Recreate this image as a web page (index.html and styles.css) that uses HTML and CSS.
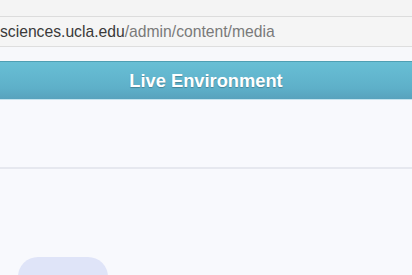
FILE: index.html
```html
<!DOCTYPE html>
<html>
<head>
<meta charset="utf-8">
<link rel="stylesheet" href="styles.css">
</head>
<body>
<div class="chrome-top"></div>
<div class="urlbar"><span class="host">sciences.ucla.edu</span><span class="path">/admin/content/media</span></div>
<div class="gap"></div>
<div class="env-bar">Live Environment</div>
<div class="toolbar"></div>
<div class="content">
  <div class="pill"></div>
</div>
</body>
</html>
```
FILE: styles.css
```css
html, body {
  margin: 0;
  padding: 0;
  background: #f8f9fd;
  overflow: hidden;
  height: 275px;
  font-family: "Liberation Sans", Arial, sans-serif;
}
.chrome-top {
  height: 16px;
  background: #f4f4f4;
  border-bottom: 1px solid #dcdcdc;
}
.urlbar {
  height: 30px;
  background: #f5f5f5;
  border-bottom: 1px solid #dedede;
  display: flex;
  align-items: center;
  font-size: 15.7px;
  line-height: 30px;
  padding-top: 1px;
  box-sizing: border-box;
  white-space: nowrap;
}
.host { color: #3a3a3a; }
.path { color: #7a7a7a; }
.gap {
  height: 14px;
  background: #f7f8fb;
}
.env-bar {
  height: 39px;
  box-sizing: border-box;
  border-top: 1px solid #4f9fb3;
  background: linear-gradient(#68bfd5, #5eb0c9 70%, #58a2bd);
  color: #fff;
  font-weight: bold;
  font-size: 18.3px;
  text-align: center;
  line-height: 38px;
  text-shadow: 0 1px 1px rgba(0,0,0,0.25);
  border-bottom: 1px solid #c6e4ee;
}
.toolbar {
  height: 67px;
  background: #f8f9fd;
  border-bottom: 2px solid #e6e8ef;
}
.content {
  height: 106px;
  overflow: hidden;
  padding: 88px 0 0 18px;
  box-sizing: border-box;
}
.pill {
  width: 90px;
  height: 40px;
  border-radius: 20px;
  background: #dfe4f8;
}
```
